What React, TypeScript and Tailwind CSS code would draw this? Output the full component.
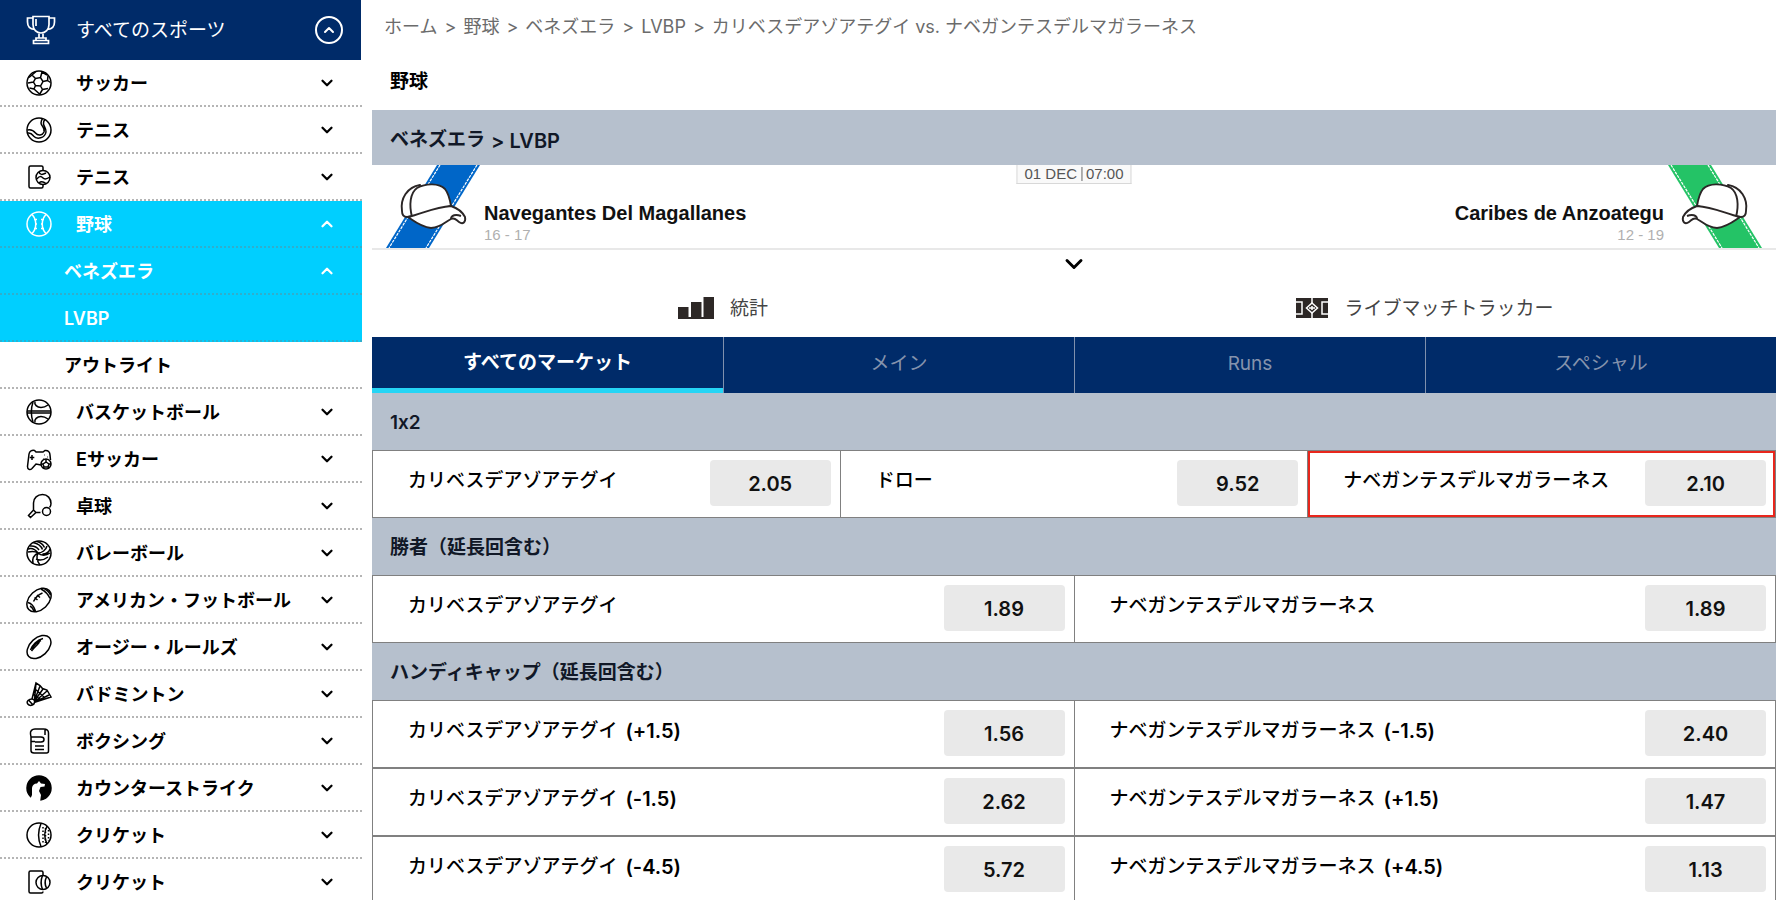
import React from 'react';
import { ChevronDown, ChevronUp } from 'lucide-react';

type IconName =
  | 'soccer' | 'tennis' | 'tennisCard' | 'baseball' | 'basketball' | 'esoccer' | 'tableTennis' | 'volleyball'
  | 'football' | 'aussie' | 'badminton' | 'boxing' | 'counterStrike' | 'cricket' | 'cricketCard';

const icons: Record<IconName, React.ReactNode> = {
  soccer: (
    <>
      <circle cx="13" cy="13" r="12" />
      <path d="M9.5 8.5l5-1 2.5 4-2.5 4.5-5-.5-2-3.5zM9.5 8.5L6 5M14.500 7.500L16 2M17 11.500l4.500-1M14.500 16l2 3.500M9.500 15.500L8 19M7.500 12L2 13M3 7.500l3-2.500 4-3.500M16 2l5 3M21.500 10.500l3 2M21.500 10.500L22 5.500M16.500 19.500l5.500-1M16.500 19.500l-3 5M8 19l5.500 5M8 19l-4.500-1" />
    </>
  ),
  tennis: (
    <>
      <circle cx="13" cy="13" r="12" />
      <path d="M1.500 13c4-1 6 .5 8 3 2.500 3 7 2.500 8.500-1 1.500-4-3-6-3-9 0-2 .5-3 1.500-4.500M2 16c3-.5 4 1 5.500 3 3.500 4 11.500 2 12.500-4 .5-4-3-6-2.500-9 0-1.500.5-2.500 1.500-3.500" />
    </>
  ),
  tennisCard: (
    <>
      <path d="M17 6V3.500Q17 2 15.500 2H4.500Q3 2 3 3.500v19Q3 24 4.500 24h11q1.500 0 1.500-1.500V21" />
      <circle cx="17" cy="13.500" r="7" />
      <path d="M13 8c1 3 3 3 7 1M11 15c2-3 4-3 6-1s4 1 7-1M13 19c2-2 5-1 7 .5" />
    </>
  ),
  baseball: (
    <>
      <circle cx="13" cy="13" r="12" />
      <path d="M6 3.500c5 5 5 14 0 19M20 3.500c-5 5-5 14 0 19M8 8.500h3M8 17.500h3M18 8.500h-3M18 17.500h-3M9.500 13H11M15 13h1.500" />
    </>
  ),
  basketball: (
    <>
      <circle cx="13" cy="13" r="12" />
      <path d="M1 12h24M1 14h24M7 3c-2 6-2 14 0 20M9 2.500c-1 3 2 6 6 6 3 0 5-1 7-2.500M9 23.500c-1-3 2-6 6-6 3 0 5 1 7 2.500" />
    </>
  ),
  esoccer: (
    <>
      <path d="M15 19l-5-1-4 4.500c-2 2-4.500 1-4.500-2L3 8c.5-3 3-4 5.500-3.500L10 6h7l2-1.500C22 4 24 6 24 9l.5 5M6 9v5M3.800 11.500h4.500M18 9h.5M21 11h.5M17 13h.5" />
      <circle cx="20" cy="18" r="5" />
      <path d="M20 13v3l-3 2 1 3h4l1-3-3-2M15 18h2M23 18h2M18 21l-1 1.500M22 21l1 1.500" />
    </>
  ),
  tableTennis: (
    <>
      <path d="M14.500 19.500H10l-5.500 5-2-2 5-5.500V10c0-5 4-8.500 9-8.500S25 5.500 25 10.500c0 1.500-.5 3-1.500 4M7.500 17l2.500 2.500" />
      <circle cx="20.500" cy="18.500" r="4" />
    </>
  ),
  volleyball: (
    <>
      <circle cx="13" cy="13" r="12" />
      <path d="M12 13C9 9 5 8 2 9M12 13c-3-2-6-2-10-1M12 13c4 0 8-3 9-7M12 13c3 3 8 3 12 0M12 13c-2 4-1 8 2 12M12 13c-4 2-6 6-5 10.500M7 2.500c5 1 8 3 9.500 7M11 1.500c4 1 6 3 7.500 6M24 9c-1 3-4 5-7.500 5M10 19c4 2 8 1 12-2M4 6c4-.5 7 1 9 4" />
    </>
  ),
  football: (
    <>
      <ellipse cx="13" cy="13" rx="14" ry="9.5" transform="rotate(-43 13 13)" />
      <path d="M2 15.500c4 1 6 4 7.500 8.500M4 19c2 1 3 2.500 4 5M15 2c4 2 7 5 9 9.500M18.500 2c3 1 4.500 3 6 6M7.500 14.500c2-4 5-7 9-8.500M8.500 10.500l3 2.500M11 8l3 2.500" />
    </>
  ),
  aussie: (
    <>
      <ellipse cx="13" cy="13" rx="14" ry="9" transform="rotate(-43 13 13)" />
      <path d="M4.500 16C6 11 11 6 17 4.500M6 15c2-4 5-7 9-8.500M5.500 17c3-4 5-5 8-9" />
    </>
  ),
  badminton: (
    <>
      <path d="M6 18L10 2l4 2.500 2.500 3L21 9l2 3.500 2 3.500-17 5.500M10 2L8.500 19M14 5L8.500 19.500M17 8L8.500 20M21 10L9 20.500M23 14L9 21M7 13l8 6M9 8l9 8" />
      <path d="M6 18c2 0 3 2 2.500 3.500C8 24 5 25 3 24s-2.500-3-1-4.500S4.500 18 6 18zM3 19.500l3.500 4" />
    </>
  ),
  boxing: (
    <>
      <path d="M8 25h12.500q2 0 2-2V5c0-3-2-4-5-4H9C6 1 4 3 4.500 6L5 9v13.500Q5 25 8 25zM5 9h10c4 0 4 5 0 5H9M5 13.500h4M9 18h9M9 21.500h9M19 1v6" />
    </>
  ),
  counterStrike: (
    <>
      <circle cx="13" cy="13" r="12" fill="currentColor" />
      <path d="M3 27l3-7V13c.5-3 2-4.500 5-4.500L13 6l2 2.500 4 .5-.5 2.500-4 .5-1.500 4 2 4-1 7z" fill="white" stroke="none" />
    </>
  ),
  cricket: (
    <>
      <circle cx="13" cy="13" r="12" />
      <path d="M15 1.500c-3 7-3 16 0 23M21 4c-3 6-3 12 0 18" />
      <path d="M17 5v17M19.500 6v15M22.500 8v11" strokeDasharray="1.500 2" />
    </>
  ),
  cricketCard: (
    <>
      <path d="M17 6V3.500Q17 2 15.500 2H4.500Q3 2 3 3.500v19Q3 24 4.500 24h11q1.500 0 1.500-1.500" />
      <circle cx="17" cy="13.500" r="7" />
      <path d="M16.500 6.500c-2 5-2 9 0 14M20.500 8c-2 4-2 7 0 11" />
    </>
  ),
};

const SportIcon = ({ name }: { name: IconName }) => (
  <svg viewBox="0 0 26 26" className="w-[26px] h-[26px] shrink-0" fill="none" stroke="currentColor" strokeWidth="1.5" aria-hidden="true">
    {icons[name]}
  </svg>
);

const TrophyIcon = () => (
  <svg viewBox="0 0 30 30" className="w-[30px] h-[30px] shrink-0" fill="none" stroke="currentColor" strokeWidth="1.7" aria-hidden="true">
    <path d="M7 1.500h16v8c0 5-3.500 8.500-8 8.500s-8-3.500-8-8.500zM7 3H1.500v4c0 4 2.500 7 7 7.500M23 3h5.500v4c0 4-2.500 7-7 7.500M10 4v7M13 18v5M17 18v5M10 23h10v2.500H10zM7.500 25.500h15v3h-15z" />
  </svg>
);

type Item = { label: string; icon?: IconName; active?: boolean; open?: boolean; leaf?: boolean };

const items: Item[] = [
  { label: 'サッカー', icon: 'soccer' },
  { label: 'テニス', icon: 'tennis' },
  { label: 'テニス', icon: 'tennisCard' },
  { label: '野球', icon: 'baseball', active: true, open: true },
  { label: 'ベネズエラ', active: true, open: true },
  { label: 'LVBP', active: true, leaf: true },
  { label: 'アウトライト', leaf: true },
  { label: 'バスケットボール', icon: 'basketball' },
  { label: 'Eサッカー', icon: 'esoccer' },
  { label: '卓球', icon: 'tableTennis' },
  { label: 'バレーボール', icon: 'volleyball' },
  { label: 'アメリカン・フットボール', icon: 'football' },
  { label: 'オージー・ルールズ', icon: 'aussie' },
  { label: 'バドミントン', icon: 'badminton' },
  { label: 'ボクシング', icon: 'boxing' },
  { label: 'カウンターストライク', icon: 'counterStrike' },
  { label: 'クリケット', icon: 'cricket' },
  { label: 'クリケット', icon: 'cricketCard' },
];

const Sidebar = () => (
  <nav className="w-[362px] shrink-0">
    <button className="w-full h-[60px] bg-[#002b69] text-white border-r border-white flex items-center pl-[26px] pr-[18px] text-[19px]">
      <TrophyIcon />
      <span className="ml-5 pt-0.5 flex-1 text-left">すべてのスポーツ</span>
      <span className="w-7 h-7 rounded-full border-2 border-white flex items-center justify-center">
        <ChevronUp className="w-4 h-4" strokeWidth={3} />
      </span>
    </button>
    <ul>
      {items.map((item, index) => (
        <li key={index}>
          <button
            className={`w-full h-[47px] flex items-center pr-[26px] text-lg font-semibold border-b-2 border-dotted ${
              item.icon ? 'pl-[26px]' : 'pl-16'
            } ${item.active ? 'bg-[#00cfff] text-white border-[#2fafcd]' : 'bg-white text-black border-[#b5b5b5]'}`}
          >
            {item.icon && <SportIcon name={item.icon} />}
            <span className={`flex-1 pt-[3px] text-left ${item.icon ? 'ml-6' : ''}`}>{item.label}</span>
            {!item.leaf &&
              (item.open ? (
                <ChevronUp className="w-[18px] h-[18px]" strokeWidth={3} />
              ) : (
                <ChevronDown className="w-[18px] h-[18px]" strokeWidth={3} />
              ))}
          </button>
        </li>
      ))}
    </ul>
  </nav>
);

const crumbs = ['ホーム', '野球', 'ベネズエラ', 'LVBP'];

const Breadcrumb = () => (
  <div className="h-[53px] pl-3 flex items-center gap-x-[7px] text-lg text-[#6b6b6b]">
    {crumbs.map((crumb) => (
      <React.Fragment key={crumb}>
        <a href="#">{crumb}</a>
        <span>&gt;</span>
      </React.Fragment>
    ))}
    <span>カリベスデアゾアテグイ vs. ナベガンテスデルマガラーネス</span>
  </div>
);

const TeamCap = ({ color, flip }: { color: string; flip?: boolean }) => (
  <svg viewBox="0 0 112 83" className={`w-28 h-[83px] shrink-0 ${flip ? '-scale-x-100' : ''}`} aria-hidden="true">
    <path d="M65 0h43L57 83H14z" fill={color} />
    <path d="M68 0L17 83M105 0L54 83" stroke="white" strokeWidth="1.2" strokeDasharray="3 1" fill="none" />
    <g fill="white" stroke="#2b2626" strokeWidth="1.900" strokeLinejoin="round">
      <path d="M48 20c-13 2-20 14-18 26 0 4 2 6 5 6l8-1z" />
      <path d="M40 52c-3-12-2-24 5-29 9-5 22-5 28 1 4 5 5 11 6 17z" />
      <path d="M36 52c14-3 26-10 43-11 6 2 11 5 14 11 1 5-2 8-6 5-3-2-4-5-8-3-6 3-9 8-20 9-10-1-17-7-23-11z" />
      <path d="M79 54c0-4 5-5 10-3" fill="none" />
    </g>
  </svg>
);

const MatchHeader = () => (
  <div className="relative flex items-center justify-between h-[85px] border-b-2 border-[#e8e8e8]">
    <div className="flex">
      <TeamCap color="#0066c8" />
      <div className="pt-[34px]">
        <p className="font-['Liberation_Sans',sans-serif] text-xl leading-7 font-bold text-[#111]">Navegantes Del Magallanes</p>
        <p className="font-['Liberation_Sans',sans-serif] text-[15px] leading-4 text-[#b0b0b0]">16 - 17</p>
      </div>
    </div>
    <div className="flex">
      <div className="pt-[34px] text-right">
        <p className="font-['Liberation_Sans',sans-serif] text-xl leading-7 font-bold text-[#111]">Caribes de Anzoategu</p>
        <p className="font-['Liberation_Sans',sans-serif] text-[15px] leading-4 text-[#b0b0b0]">12 - 19</p>
      </div>
      <TeamCap color="#24c366" flip />
    </div>
    <div className="absolute top-0 left-1/2 -translate-x-1/2 h-[19px] px-[7px] flex items-center gap-1 whitespace-nowrap bg-[#f9f9f9] border border-t-0 border-[#d8d8d8] font-['Liberation_Sans',sans-serif] text-[15px] text-[#555]">
      <span>01 DEC</span>
      <span className="w-px h-[14px] bg-[#666]"></span>
      <span>07:00</span>
    </div>
  </div>
);

const StatsIcon = () => (
  <svg viewBox="0 0 36 22" className="w-9 h-[22px]" fill="#2d2826" aria-hidden="true">
    <path d="M0 10h10.500v10H0zM13 5h10.500v15H13zM25.500 0H36v20H25.500zM0 20h36v2H0z" />
  </svg>
);

const PitchIcon = () => (
  <svg viewBox="0 0 32 20" className="w-8 h-5" aria-hidden="true">
    <rect width="32" height="20" fill="#2d2826" />
    <g fill="none" stroke="white" strokeWidth="1.500">
      <path d="M0 4h6v12H0M32 4h-6v12h6M16 0v5M16 15v5" />
      <path d="M16 5l5.500 5-5.500 5-5.500-5zM13 10h6M16 8v4" />
    </g>
  </svg>
);

const tabs = ['すべてのマーケット', 'メイン', 'Runs', 'スペシャル'];

type Outcome = { label: string; line?: string; odds: string; selected?: boolean };

const markets: { title: string; rows: Outcome[][] }[] = [
  {
    title: '1x2',
    rows: [
      [
        { label: 'カリベスデアゾアテグイ', odds: '2.05' },
        { label: 'ドロー', odds: '9.52' },
        { label: 'ナベガンテスデルマガラーネス', odds: '2.10', selected: true },
      ],
    ],
  },
  {
    title: '勝者（延長回含む）',
    rows: [
      [
        { label: 'カリベスデアゾアテグイ', odds: '1.89' },
        { label: 'ナベガンテスデルマガラーネス', odds: '1.89' },
      ],
    ],
  },
  {
    title: 'ハンディキャップ（延長回含む）',
    rows: [
      [
        { label: 'カリベスデアゾアテグイ', line: '(+1.5)', odds: '1.56' },
        { label: 'ナベガンテスデルマガラーネス', line: '(-1.5)', odds: '2.40' },
      ],
      [
        { label: 'カリベスデアゾアテグイ', line: '(-1.5)', odds: '2.62' },
        { label: 'ナベガンテスデルマガラーネス', line: '(+1.5)', odds: '1.47' },
      ],
      [
        { label: 'カリベスデアゾアテグイ', line: '(-4.5)', odds: '5.72' },
        { label: 'ナベガンテスデルマガラーネス', line: '(+4.5)', odds: '1.13' },
      ],
    ],
  },
];

const OutcomeCell = ({ outcome }: { outcome: Outcome }) => (
  <div
    className={`flex-1 flex items-start justify-between border-l border-[#808080] pl-[35px] pr-[9px] pt-[9px] ${
      outcome.selected ? 'ring-2 ring-inset ring-[#e8261c]' : ''
    }`}
  >
    <span className="pt-[7px] flex items-center gap-2 text-[19px] leading-7 font-medium">
      {outcome.label}
      {outcome.line && <span className="text-xl leading-7 font-semibold">{outcome.line}</span>}
    </span>
    <button className="w-[121px] h-[46px] pt-0.5 rounded bg-[#e9e9e9] text-xl font-semibold text-[#111]">{outcome.odds}</button>
  </div>
);

const App = () => {
  return (
    <div className="h-screen overflow-hidden flex bg-white text-black font-['Inter','Noto_Sans_CJK_JP',sans-serif] [font-feature-settings:'calt'_0]">
      <Sidebar />

      <main className="flex-1 min-w-0 ml-[10px] mr-1">
        <Breadcrumb />
        <h1 className="h-[57px] pt-0.5 pl-[18px] flex items-center text-[19px] font-semibold">野球</h1>
        <h2 className="h-[55px] pt-1.5 pl-[18px] flex items-center gap-1.5 bg-[#b6c0cd] text-[19px] font-semibold text-[#111827]">
          ベネズエラ <span className="text-xl">&gt; LVBP</span>
        </h2>

        <MatchHeader />
        <button aria-label="詳細" className="w-full h-7 flex items-center justify-center">
          <ChevronDown className="w-7 h-7" strokeWidth={2.5} />
        </button>

        {/* Statistics and live tracker links */}
        <div className="grid grid-cols-2 h-[59px] text-[19px] text-[#444]">
          <a href="#" className="flex items-center justify-center gap-4">
            <StatsIcon />
            <span className="pt-[3px]">統計</span>
          </a>
          <a href="#" className="flex items-center justify-center gap-4">
            <PitchIcon />
            <span className="pt-[3px]">ライブマッチトラッカー</span>
          </a>
        </div>

        <div className="grid grid-cols-4 h-14 bg-[#002b69] text-[19px]">
          {tabs.map((tab, index) => (
            <button
              key={tab}
              className={
                index === 0
                  ? 'text-white font-semibold pt-0.5 border-b-[5px] border-[#25d5f5]'
                  : 'text-[#8593ad] border-l border-[#7f90ad] pb-0.5'
              }
            >
              {tab}
            </button>
          ))}
        </div>

        {/* Markets */}
        {markets.map((market) => (
          <section key={market.title}>
            <h3 className="h-[57px] pt-[3px] pl-[18px] flex items-center bg-[#b6c0cd] text-[19px] font-semibold text-[#111827]">{market.title}</h3>
            {market.rows.map((row, index) => (
              <div key={index} className="flex h-[68px] border-r border-y border-[#808080]">
                {row.map((outcome) => (
                  <OutcomeCell key={outcome.label} outcome={outcome} />
                ))}
              </div>
            ))}
          </section>
        ))}
      </main>
    </div>
  );
};

export default App;
